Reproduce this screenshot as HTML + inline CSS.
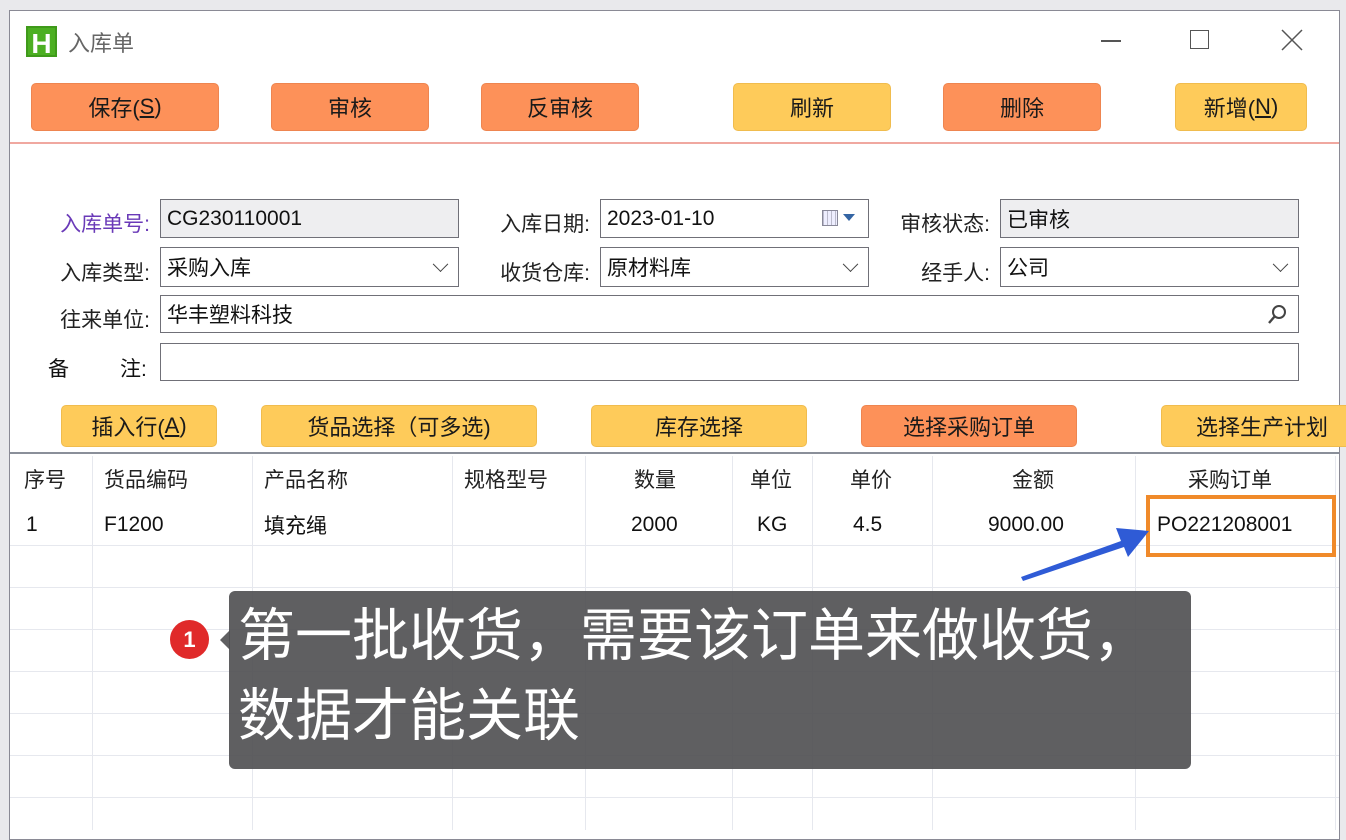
<!DOCTYPE html>
<html><head><meta charset="utf-8">
<style>
*{margin:0;padding:0;box-sizing:border-box}
body{width:1346px;height:830px;background:#e9e9ec;position:relative;overflow:hidden;font-family:"Liberation Sans","Noto Sans CJK SC",sans-serif;color:#111}
.win{position:absolute;left:9px;top:10px;width:1331px;height:830px;background:#fff;border:1px solid #8a8a95;}
.a{position:absolute}
.btn{position:absolute;border-radius:5px;font-size:22px;display:flex;align-items:center;justify-content:center;color:#1a1a1a}
.o{background:#fd9159;border:1px solid #ee8550}
.y{background:#fecb5a;border:1px solid #f0bc4e}
.lbl{position:absolute;font-size:21px;color:#222;text-align:right;width:140px}
.in{position:absolute;border:1.5px solid #707078;background:#fff;font-size:21px;padding-left:6px;display:flex;align-items:center;color:#111}
.g{background:#eeeef0}
.chev{position:absolute;right:12px;top:50%;width:11px;height:11px;border-right:1.6px solid #444;border-bottom:1.6px solid #444;transform:translateY(-75%) rotate(45deg)}
.vl{position:absolute;top:456px;width:1px;height:374px;background:#e6e8ee}
.hl{position:absolute;left:10px;width:1329px;height:1px;background:#e6e8ee}
.th{position:absolute;top:464px;font-size:21px;color:#222}
.td{position:absolute;top:513px;font-size:21px;color:#111}
</style></head><body>
<div class="win"></div>
<div class="a" style="left:26px;top:26px;width:31px;height:31px;background:#4caf22;color:#fff;font-weight:bold;font-size:28px;line-height:31px;text-align:center;border:2px solid #3f9a1a">H</div>
<div class="a" style="left:68px;top:26px;font-size:22px;color:#666">入库单</div>
<div class="a" style="left:1101px;top:40px;width:20px;height:1.5px;background:#555"></div>
<div class="a" style="left:1190px;top:30px;width:19px;height:19px;border:1.5px solid #555"></div>
<svg class="a" style="left:1281px;top:29px" width="22" height="22"><path d="M1 1L21 21M21 1L1 21" stroke="#555" stroke-width="1.5"/></svg>
<div class="btn o" style="left:31px;top:83px;width:188px;height:48px">保存(<u>S</u>)</div>
<div class="btn o" style="left:271px;top:83px;width:158px;height:48px">审核</div>
<div class="btn o" style="left:481px;top:83px;width:158px;height:48px">反审核</div>
<div class="btn y" style="left:733px;top:83px;width:158px;height:48px">刷新</div>
<div class="btn o" style="left:943px;top:83px;width:158px;height:48px">删除</div>
<div class="btn y" style="left:1175px;top:83px;width:132px;height:48px">新增(<u>N</u>)</div>
<div class="a" style="left:10px;top:142px;width:1329px;height:1.5px;background:#f0a8a0"></div>
<div class="lbl" style="left:10px;top:208px;color:#6a3ab8">入库单号:</div>
<div class="in g" style="left:160px;top:199px;width:299px;height:39px">CG230110001</div>
<div class="lbl" style="left:450px;top:208px">入库日期:</div>
<div class="in" style="left:600px;top:199px;width:269px;height:39px">2023-01-10
<div class="a" style="right:30px;top:10px;width:16px;height:16px;border:1px solid #889;background:repeating-linear-gradient(90deg,#bbc 0 1px,#eef 1px 4px)"></div>
<div class="a" style="right:13px;top:14px;width:0;height:0;border-left:6px solid transparent;border-right:6px solid transparent;border-top:7px solid #3465a4"></div></div>
<div class="lbl" style="left:850px;top:208px">审核状态:</div>
<div class="in g" style="left:1000px;top:199px;width:299px;height:39px">已审核</div>
<div class="lbl" style="left:10px;top:257px">入库类型:</div>
<div class="in" style="left:160px;top:247px;width:299px;height:40px">采购入库<div class="chev"></div></div>
<div class="lbl" style="left:450px;top:257px">收货仓库:</div>
<div class="in" style="left:600px;top:247px;width:269px;height:40px">原材料库<div class="chev"></div></div>
<div class="lbl" style="left:850px;top:257px">经手人:</div>
<div class="in" style="left:1000px;top:247px;width:299px;height:40px">公司<div class="chev"></div></div>
<div class="lbl" style="left:10px;top:304px">往来单位:</div>
<div class="in" style="left:160px;top:295px;width:1139px;height:38px">华丰塑料科技
<svg class="a" style="right:10px;top:8px" width="22" height="22"><circle cx="13" cy="8" r="6" fill="none" stroke="#444" stroke-width="2"/><path d="M9 12L3 19" stroke="#444" stroke-width="2.4"/></svg></div>
<div class="a" style="left:48px;top:353px;font-size:21px">备</div>
<div class="a" style="left:120px;top:353px;font-size:21px">注:</div>
<div class="in" style="left:160px;top:343px;width:1139px;height:38px"></div>
<div class="btn y" style="left:61px;top:405px;width:156px;height:42px">插入行(<u>A</u>)</div>
<div class="btn y" style="left:261px;top:405px;width:276px;height:42px">货品选择（可多选)</div>
<div class="btn y" style="left:591px;top:405px;width:216px;height:42px">库存选择</div>
<div class="btn o" style="left:861px;top:405px;width:216px;height:42px">选择采购订单</div>
<div class="btn y" style="left:1161px;top:405px;width:200px;height:42px;justify-content:flex-start;padding-left:34px;white-space:nowrap;overflow:hidden">选择生产计划</div>
<div class="a" style="left:10px;top:452px;width:1329px;height:2px;background:#8a8f99"></div>
<div class="vl" style="left:92px"></div><div class="vl" style="left:252px"></div><div class="vl" style="left:452px"></div><div class="vl" style="left:585px"></div><div class="vl" style="left:732px"></div><div class="vl" style="left:812px"></div><div class="vl" style="left:932px"></div><div class="vl" style="left:1135px"></div><div class="vl" style="left:1335px"></div>
<div class="hl" style="top:545px"></div><div class="hl" style="top:587px"></div><div class="hl" style="top:629px"></div><div class="hl" style="top:671px"></div><div class="hl" style="top:713px"></div><div class="hl" style="top:755px"></div><div class="hl" style="top:797px"></div>
<div class="th" style="left:24px">序号</div><div class="th" style="left:104px">货品编码</div><div class="th" style="left:264px">产品名称</div><div class="th" style="left:464px">规格型号</div><div class="th" style="left:634px">数量</div><div class="th" style="left:750px">单位</div><div class="th" style="left:850px">单价</div><div class="th" style="left:1012px">金额</div><div class="th" style="left:1188px">采购订单</div>
<div class="td" style="left:26px">1</div><div class="td" style="left:104px">F1200</div><div class="td" style="left:264px;top:510px">填充绳</div><div class="td" style="left:631px">2000</div><div class="td" style="left:757px">KG</div><div class="td" style="left:853px">4.5</div><div class="td" style="left:988px">9000.00</div><div class="td" style="left:1157px">PO221208001</div>
<div class="a" style="left:1146px;top:495px;width:190px;height:62px;border:4px solid #f08a2a"></div>
<svg class="a" style="left:1015px;top:515px" width="140" height="70"><path d="M6 62L106 26L101 13L134 16L113 42L109 32L8 66Z" fill="#2f5bd6"/></svg>
<div class="a" style="left:229px;top:591px;width:962px;height:178px;background:rgba(78,78,80,0.9);border-radius:6px"></div>
<div class="a" style="left:220px;top:630px;width:0;height:0;border-top:10px solid transparent;border-bottom:10px solid transparent;border-right:10px solid rgba(78,78,80,0.9)"></div>
<div class="a" style="left:238px;top:596px;font-size:57px;line-height:80px;color:#fff;white-space:nowrap">第一批收货，需要该订单来做收货，<br>数据才能关联</div>
<div class="a" style="left:170px;top:620px;width:39px;height:39px;border-radius:50%;background:#e02a2a;color:#fff;font-size:22px;font-weight:bold;text-align:center;line-height:39px">1</div>
</body></html>
